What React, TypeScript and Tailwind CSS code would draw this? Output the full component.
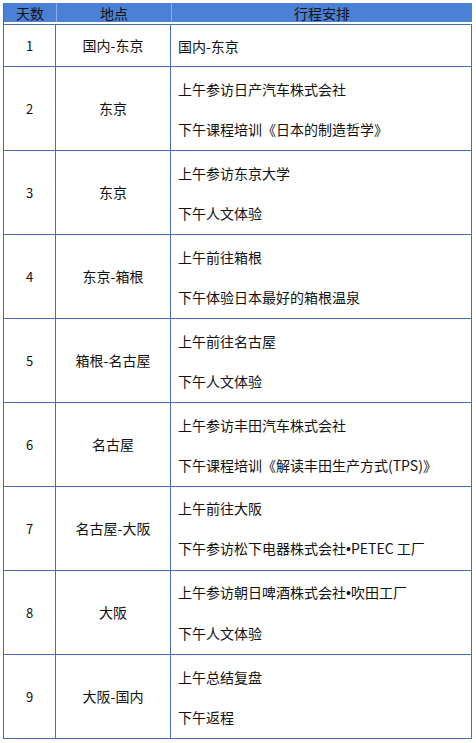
import React from "react";

const rows: { day: string; place: string; plan: string[] }[] = [
  { day: "1", place: "国内-东京", plan: ["国内-东京"] },
  { day: "2", place: "东京", plan: ["上午参访日产汽车株式会社", "下午课程培训《日本的制造哲学》"] },
  { day: "3", place: "东京", plan: ["上午参访东京大学", "下午人文体验"] },
  { day: "4", place: "东京-箱根", plan: ["上午前往箱根", "下午体验日本最好的箱根温泉"] },
  { day: "5", place: "箱根-名古屋", plan: ["上午前往名古屋", "下午人文体验"] },
  { day: "6", place: "名古屋", plan: ["上午参访丰田汽车株式会社", "下午课程培训《解读丰田生产方式(TPS)》"] },
  { day: "7", place: "名古屋-大阪", plan: ["上午前往大阪", "下午参访松下电器株式会社•PETEC 工厂"] },
  { day: "8", place: "大阪", plan: ["上午参访朝日啤酒株式会社•吹田工厂", "下午人文体验"] },
  { day: "9", place: "大阪-国内", plan: ["上午总结复盘", "下午返程"] },
];

function Line({ text }: { text: string }) {
  const parts = text.split("•");
  return (
    <div className="leading-[20px] whitespace-nowrap">
      {parts.map((p, i) => (
        <React.Fragment key={i}>
          {i > 0 && (
            <span style={{ fontFamily: '"Liberation Sans", sans-serif' }}>•</span>
          )}
          {p}
        </React.Fragment>
      ))}
    </div>
  );
}

export default function App() {
  return (
    <div
      className="w-[476px] h-[743px] bg-white pt-[3px] pl-[3px] text-[14px] text-[#111]"
      style={{ fontFamily: '"Microsoft YaHei", "Noto Sans CJK SC", "Noto Sans", sans-serif' }}
    >
      <div className="w-[469px] border-l border-b border-[#4a6bb5]">
        <div className="flex h-[21px] bg-[#4a80d6] border-b-2 border-white">
          <div className="w-[53px] flex items-center justify-center border-r border-[#8fb0e6] leading-none">天数</div>
          <div className="w-[115px] flex items-center justify-center border-r border-[#8fb0e6] leading-none">地点</div>
          <div className="flex-1 flex items-center justify-center leading-none">行程安排</div>
        </div>
        {rows.map((r, i) => (
          <div
            key={r.day}
            className={`flex border-t border-[#4a6bb5] ${i === 0 ? "h-[42px]" : "h-[84px]"}`}
          >
            <div className="w-[52px] flex items-center justify-center border-r border-[#4a6bb5] text-[13px]">
              {r.day}
            </div>
            <div className="w-[115px] flex items-center justify-center border-r border-[#4a6bb5]">
              {r.place}
            </div>
            <div className="flex-1 flex flex-col justify-center gap-[20px] pl-[7px] border-r border-[#4a6bb5]">
              {r.plan.map((p) => (
                <Line key={p} text={p} />
              ))}
            </div>
          </div>
        ))}
      </div>
    </div>
  );
}
